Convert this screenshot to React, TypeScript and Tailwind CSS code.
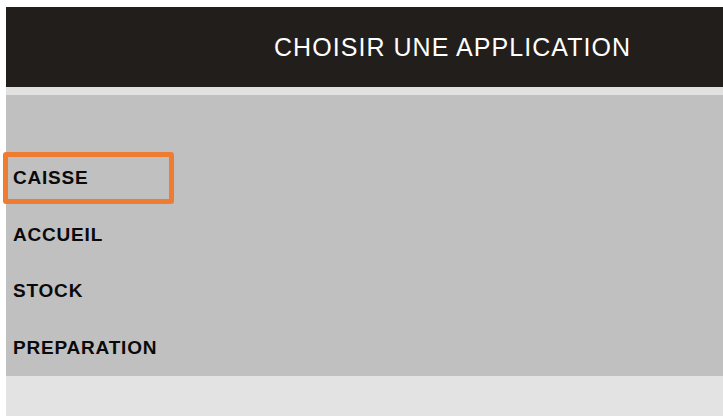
import React from "react";

const items = ["CAISSE", "ACCUEIL", "STOCK", "PREPARATION"];

export default function App() {
  return (
    <div
      className="w-[723px] h-[416px] overflow-hidden bg-white pt-[7px] pl-[6px] flex flex-col"
      style={{ fontFamily: '"Liberation Sans", Arial, sans-serif' }}
    >
      <div className="h-[80px] shrink-0 bg-[#221e1b] flex items-center pl-[268px]">
        <span className="text-white text-[25px] leading-[28px] tracking-[1.05px]">
          CHOISIR UNE APPLICATION
        </span>
      </div>
      <div className="h-[8px] shrink-0 bg-[#e1e1e1]" />
      <div className="h-[281px] shrink-0 bg-[#c0c0c0] pt-[57px] flex flex-col gap-[4.5px]">
        {items.map((it, i) => (
          <div
            key={it}
            className={
              "ml-[-3px] w-[171px] h-[52px] border-[5px] rounded-[3px] pl-[5px] flex items-center " +
              (i === 0 ? "border-[#ef7d31]" : "border-transparent")
            }
          >
            <span className="text-[19px] leading-[24px] font-bold tracking-[0.8px] text-[#0a0a0a]">
              {it}
            </span>
          </div>
        ))}
      </div>
      <div className="flex-1 bg-[#e3e3e3]" />
    </div>
  );
}
